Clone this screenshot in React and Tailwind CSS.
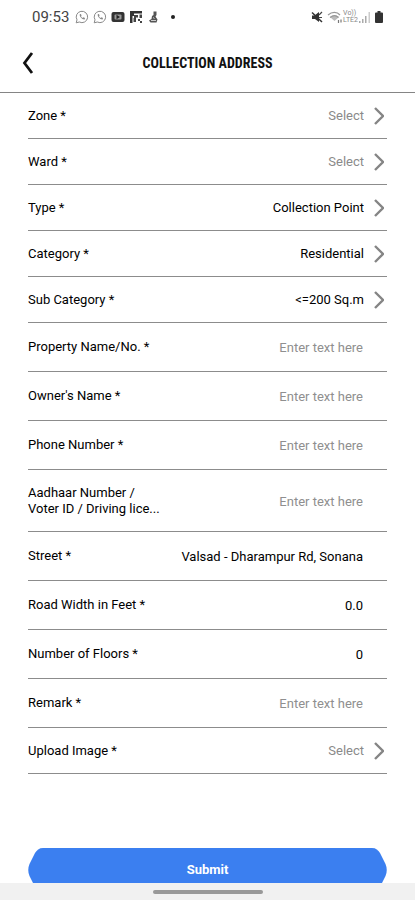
import React, { useState } from 'react';

const FIELDS = [
    { id: 'zone', label: 'Zone *', type: 'select', options: ['Zone 1', 'Zone 2'] },
    { id: 'ward', label: 'Ward *', type: 'select', options: ['Ward 1', 'Ward 2'] },
    { id: 'type', label: 'Type *', type: 'select', options: ['Collection Point'] },
    { id: 'category', label: 'Category *', type: 'select', options: ['Residential'] },
    { id: 'subCategory', label: 'Sub Category *', type: 'select', options: ['<=200 Sq.m'] },
    { id: 'propertyName', label: 'Property Name/No. *', type: 'text' },
    { id: 'ownerName', label: "Owner's Name *", type: 'text' },
    { id: 'phone', label: 'Phone Number *', type: 'text' },
    { id: 'idNumber', label: 'Aadhaar Number / Voter ID / Driving lice...', type: 'text', tall: true },
    { id: 'street', label: 'Street *', type: 'text' },
    { id: 'roadWidth', label: 'Road Width in Feet *', type: 'text' },
    { id: 'floors', label: 'Number of Floors *', type: 'text' },
    { id: 'remark', label: 'Remark *', type: 'text' },
    { id: 'image', label: 'Upload Image *', type: 'upload' },
];

const INITIAL = {
    type: 'Collection Point',
    category: 'Residential',
    subCategory: '<=200 Sq.m',
    street: 'Valsad - Dharampur Rd, Sonana',
    roadWidth: '0.0',
    floors: '0',
};

const WhatsAppIcon = () => (
    <svg viewBox="0 0 14 14" className="w-3.5 h-3.5" fill="none" stroke="#888" strokeWidth="1">
        <path d="M1.2 12.8 2 9.8A5.7 5.7 0 1 1 4.3 12z" />
        <path d="M4.8 4.2c-.8 2 2.6 5.6 4.8 5.2l.4-1.3-1.5-.8-.8.7C6.8 7.6 6.2 6.900 6 6.200l.6-.7-.7-1.500z" fill="#888" stroke="none" />
    </svg>
);

const StatusBar = () => (
    <div className="flex items-center justify-between h-[34px] shrink-0 px-8 text-[#444]">
        <div className="flex items-center gap-1">
            <span className="text-[15px] leading-5 mr-0.5">09:53</span>
            <WhatsAppIcon />
            <WhatsAppIcon />
            <svg viewBox="0 0 14 14" className="w-3.5 h-3.5">
                <rect x="0.5" y="2" width="13" height="10" rx="2" fill="#333" />
                <rect x="3.5" y="4.5" width="7" height="5" rx="1" fill="#999" />
                <path d="M5.500 4.800v4.400L9 7z" fill="#222" />
            </svg>
            <svg viewBox="0 0 14 14" className="w-3.5 h-3.5">
                <path d="M1 1h12v2.500H5V6H3.500v7H1z" fill="#333" />
                <path d="M5 5h4v2.500H7V12H4.500V8H5z" fill="#444" />
                <path d="M10.500 4.500H13V8h-2.500zM9 9h2v2H9zM11 11h2v2h-2z" fill="#444" />
            </svg>
            <svg viewBox="0 0 14 14" className="w-3.5 h-3.5" fill="#555">
                <path d="M6.500 1.500h3V5l-1 1.500 2 3-1 3H3.500L2 10.500 4.500 9l.5-3 1.500-1z" />
                <path d="M4 10.500h5M6 7.500l1.500 1" stroke="#ccc" fill="none" />
            </svg>
            <span className="w-1 h-1 ml-1.5 rounded-full bg-[#222]" />
        </div>
        <div className="flex items-center">
            <svg viewBox="0 0 12 14" className="w-3 h-3.5" fill="#333">
                <path d="M1 5.500h2.500L8 2v10L4 9H1z" />
                <path d="M1 2.500l10 9.500" stroke="#333" strokeWidth="1.5" />
                <path d="M8 5l3-3M8 7.500h3" stroke="#444" strokeWidth="1.2" />
            </svg>
            <svg viewBox="0 0 16 14" className="w-4 h-3.5 ml-1" fill="none" stroke="#999" strokeWidth="1.2">
                <path d="M3 7l4.500 4L12 7c-3-2.500-6-2.500-9 0z" fill="#bbb" stroke="none" />
                <path d="M1 5c4-3.500 9-3.500 12 0M3 7.500c3-2.500 6-2.500 8.500 0" />
                <path d="M11.500 10v3M14 9.500v3" stroke="#777" />
            </svg>
            <span className="flex flex-col text-[7px] leading-[7px] text-[#888]">
                <span>Vo))</span>
                <span>LTE2</span>
            </span>
            <svg viewBox="0 0 13 14" className="w-[13px] h-3.5" fill="#aaa">
                <path d="M1 11h1.500v2H1zM4 9h1.500v4H4zM7 6h1.500v7H7z" />
                <path d="M10.500 2H12v11h-1.500z" fill="#ccc" />
            </svg>
            <svg viewBox="0 0 8 12" className="w-2 h-3 ml-1" fill="#333">
                <path d="M2.500 0h3v1.500H7q1 0 1 1V11q0 1-1 1H1q-1 0-1-1V2.500q0-1 1-1h1.500z" />
            </svg>
        </div>
    </div>
);

const Chevron = () => (
    <svg viewBox="0 0 10 18" className="w-2.5 h-[18px] shrink-0 pointer-events-none" fill="none" stroke="#858585" strokeWidth="2.4">
        <path d="M1 1l8 8-8 8" />
    </svg>
);

const Field = ({ field, value, onChange }) => {
    const height = field.type !== 'text' ? 'h-[46px]' : field.tall ? 'h-[62px]' : 'h-[49px]';

    return (
        <div className={`flex items-center justify-between border-b border-[#8c8c8c] ${height}`}>
            <label htmlFor={field.id} className="max-w-[134px] shrink-0 leading-4 text-black">
                {field.label}
            </label>

            {field.type === 'select' && (
                <div className="flex flex-1 items-center gap-2.5 pr-[3px]">
                    <select
                        id={field.id}
                        value={value}
                        onChange={(e) => onChange(field.id, e.target.value)}
                        className={`flex-1 min-w-0 appearance-none bg-transparent text-right outline-none ${value ? 'text-black' : 'text-[#8a8a8a]'}`}
                    >
                        <option value="">Select</option>
                        {field.options.map((option) => (
                            <option key={option} value={option}>{option}</option>
                        ))}
                    </select>
                    <Chevron />
                </div>
            )}

            {field.type === 'text' && (
                <input
                    id={field.id}
                    type="text"
                    value={value}
                    placeholder="Enter text here"
                    onChange={(e) => onChange(field.id, e.target.value)}
                    className="flex-1 min-w-0 pt-0.5 pr-6 text-right text-black placeholder:text-[#8f8f8f] outline-none"
                />
            )}

            {field.type === 'upload' && (
                <button id={field.id} type="button" className="flex flex-1 items-center justify-end gap-2.5 pr-[3px] text-[#8a8a8a]">
                    Select
                    <Chevron />
                </button>
            )}
        </div>
    );
};

const ButtonCap = ({ className }) => (
    <svg viewBox="0 0 16 44" className={`w-4 h-11 shrink-0 ${className}`}>
        <path d="M16 0h-1C11 0 9 2 7 5L1.5 16q-2.5 6 0 12L7 39c2 3 4 5 8 5h1z" fill="#3b7ff0" />
    </svg>
);

const App = () => {
    const [values, setValues] = useState(INITIAL);

    const handleChange = (id, value) => {
        setValues((prev) => ({ ...prev, [id]: value }));
    };

    return (
        <div className="flex flex-col h-screen bg-white font-['Roboto',sans-serif] text-[13px]">
            <StatusBar />

            <header className="grid grid-cols-[40px_1fr_40px] items-center h-[59px] shrink-0 px-5 border-b border-[#858585]">
                <button type="button" aria-label="Back" className="flex w-4 justify-center">
                    <svg viewBox="0 0 12 22" className="w-3 h-[22px]" fill="none" stroke="#111" strokeWidth="2.8">
                        <path d="M10 1L2.500 11l7.500 10" />
                    </svg>
                </button>
                <h1 className="text-center text-[14px] leading-5 font-bold whitespace-nowrap text-[#111] font-['Roboto_Condensed','Liberation_Sans_Narrow','Roboto',sans-serif]">
                    COLLECTION ADDRESS
                </h1>
            </header>

            <form
                onSubmit={(e) => e.preventDefault()}
                className="flex-1 min-h-0 overflow-y-auto px-7 [scrollbar-width:none]"
            >
                {FIELDS.map((field) => (
                    <Field key={field.id} field={field} value={values[field.id] || ''} onChange={handleChange} />
                ))}

                <button type="submit" className="flex w-full mt-[74px] text-white font-bold">
                    <ButtonCap className="" />
                    <span className="flex flex-1 items-center justify-center h-11 bg-[#3b7ff0]">Submit</span>
                    <ButtonCap className="rotate-180" />
                </button>
            </form>

            {/* Gesture bar */}
            <div className="flex items-center justify-center h-[17px] shrink-0 bg-[#f1f1f1]">
                <div className="w-[110px] h-1 rounded-sm bg-[#999]" />
            </div>
        </div>
    );
};

export default App;
